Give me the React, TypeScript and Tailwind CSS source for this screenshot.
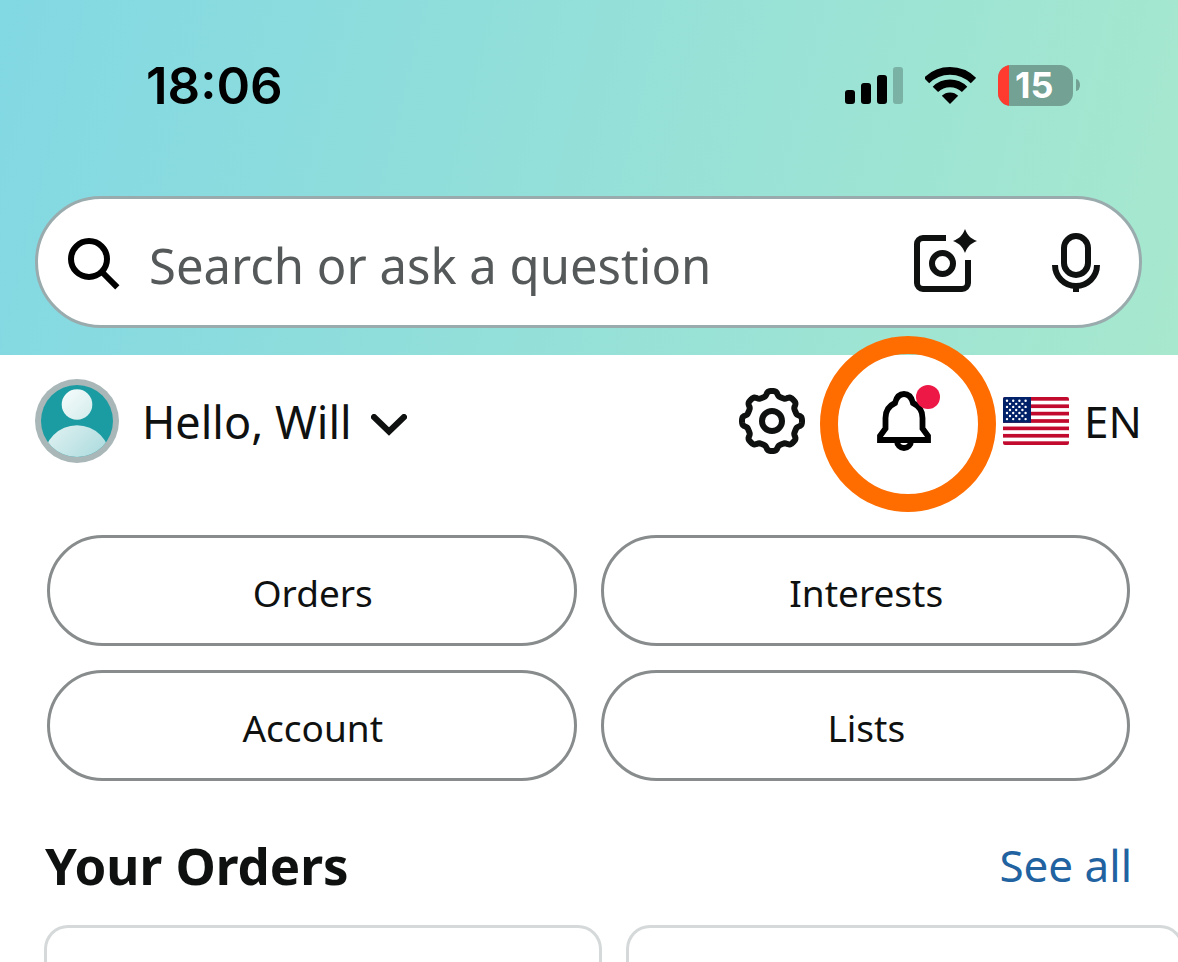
import type { ReactNode } from "react";

const SHORTCUTS = ["Orders", "Interests", "Account", "Lists"];

function gearOutline(): string {
  const steps = 240;
  const points: string[] = [];
  for (let i = 0; i < steps; i++) {
    const angle = (i / steps) * Math.PI * 2;
    const wave = Math.tanh(2 * Math.cos(8 * angle)) / Math.tanh(2);
    const r = 27.6 + 2.4 * wave;
    points.push(`${(33 + r * Math.cos(angle)).toFixed(2)} ${(33 + r * Math.sin(angle)).toFixed(2)}`);
  }
  return `M${points.join("L")}Z`;
}

const GEAR = gearOutline();

function SignalIcon() {
  return (
    <svg width="58" height="37" viewBox="0 0 58 37" aria-hidden="true">
      <rect x="0" y="23" width="10" height="14" rx="3" />
      <rect x="16" y="16" width="10" height="21" rx="3" />
      <rect x="32" y="8" width="10" height="29" rx="3" />
      <rect x="48" y="0" width="10" height="37" rx="3" opacity="0.22" />
    </svg>
  );
}

function WifiIcon() {
  return (
    <svg width="51" height="37" viewBox="0 0 51 37" fill="none" stroke="#000" strokeWidth="7.6" aria-hidden="true">
      <path d="M1.5 13.6A33.2 33.2 0 0 1 48.5 13.6" />
      <path d="M10.4 22.4A20.6 20.6 0 0 1 39.6 22.4" />
      <path d="M25 37L16.8 28.8A11.7 11.7 0 0 1 33.2 28.8Z" fill="#000" stroke="none" />
    </svg>
  );
}

function Battery() {
  return (
    <div className="flex items-center gap-[3px]">
      <div className="flex h-[41px] w-[75px] items-center overflow-hidden rounded-[13px] bg-[#73a193]">
        <div className="h-full w-[11px] bg-[#ff3b30]" />
        <span className="pl-[6px] text-[36px] leading-none font-bold text-white">15</span>
      </div>
      <div className="h-3 w-1 rounded-r-[4px_6px] bg-[#73a193]" />
    </div>
  );
}

function SearchIcon() {
  return (
    <svg width="52" height="52" viewBox="0 0 52 52" fill="none" stroke="#000" strokeWidth="6" aria-hidden="true">
      <circle cx="21" cy="21" r="18" />
      <path d="M33.5 33.5L49.3 49.3" />
    </svg>
  );
}

function CameraIcon() {
  return (
    <svg width="63" height="67" viewBox="0 0 63 67" fill="none" stroke="#0f1111" strokeWidth="6" aria-hidden="true">
      <path d="M32 9H9a6 6 0 0 0-6 6V54a6 6 0 0 0 6 6H48a6 6 0 0 0 6-6V31" />
      <circle cx="28.5" cy="34.5" r="10.5" />
      <path d="M51 0C54 7 56 9 63 12C56 15 54 17 51 24C48 17 46 15 39 12C46 9 48 7 51 0Z" fill="#0f1111" stroke="none" />
    </svg>
  );
}

function MicIcon() {
  return (
    <svg width="48" height="59" viewBox="0 0 48 59" fill="none" stroke="#0f1111" strokeWidth="6" aria-hidden="true">
      <rect x="12" y="3" width="24" height="39" rx="12" />
      <path d="M3 32a21 21 0 0 0 42 0M24 53V59" />
    </svg>
  );
}

function Avatar() {
  return (
    <svg width="84" height="84" viewBox="0 0 84 84" aria-hidden="true">
      <defs>
        <linearGradient id="head" x1="0" y1="0" x2="1" y2="1">
          <stop offset="0" stopColor="#f7fcfc" />
          <stop offset="1" stopColor="#d3ebeb" />
        </linearGradient>
        <linearGradient id="body" x1="0.1" y1="0" x2="0.7" y2="0.6">
          <stop offset="0" stopColor="#e0f1f1" />
          <stop offset="1" stopColor="#aedcdf" />
        </linearGradient>
        <clipPath id="disc">
          <circle cx="42" cy="42" r="36" />
        </clipPath>
      </defs>
      <circle cx="42" cy="42" r="42" fill="#a9b7b8" />
      <circle cx="42" cy="42" r="36" fill="#1a9ca2" />
      <circle cx="42" cy="25.500" r="15.300" fill="url(#head)" />
      <circle cx="42" cy="79.500" r="33.200" fill="url(#body)" clipPath="url(#disc)" />
    </svg>
  );
}

function ChevronIcon() {
  return (
    <svg width="36" height="22" viewBox="0 0 36 22" fill="none" stroke="#0f1111" strokeWidth="6" strokeLinecap="round" aria-hidden="true">
      <path d="M3 3L18 17.500L33 3" />
    </svg>
  );
}

function GearIcon() {
  return (
    <svg width="66" height="66" viewBox="0 0 66 66" fill="none" stroke="#0f1111" strokeWidth="6" strokeLinejoin="round" aria-hidden="true">
      <path d={GEAR} />
      <circle cx="33" cy="33" r="10" />
    </svg>
  );
}

function BellIcon() {
  return (
    <svg width="54" height="60" viewBox="0 0 54 60" fill="none" stroke="#000" strokeWidth="5.800" aria-hidden="true">
      <path d="M3 49V45L8.500 37.500V27C8.500 20 12 14.800 18 12C19.500 6 22.500 3 27 3S34.500 6 36 12C42 14.800 45.500 20 45.500 27V37.500L51 45V49Z" />
      <path d="M20 50a7 7 0 0 0 14 0" />
    </svg>
  );
}

function FlagIcon() {
  const h = 48 / 13;
  return (
    <svg width="66" height="48" viewBox="0 0 66 48" aria-hidden="true">
      <clipPath id="flag">
        <rect width="66" height="48" rx="2" />
      </clipPath>
      <g clipPath="url(#flag)">
        <rect width="66" height="48" fill="#fff" />
        {[0, 2, 4, 6, 8, 10, 12].map((i) => (
          <rect key={i} y={i * h} width="66" height={h} fill="#c10a2e" />
        ))}
        <rect width="28" height="25.800" fill="#012169" />
        {Array.from({ length: 7 }, (_, row) =>
          Array.from({ length: row % 2 ? 3 : 4 }, (_, col) => (
            <circle key={`${row}-${col}`} cx={4 + (row % 2 ? 3 : 0) + col * 6.200} cy={3.800 + row * 3.050} r="1.200" fill="#fff" />
          )),
        )}
      </g>
    </svg>
  );
}

function IconButton({ label, children }: { label: string; children: ReactNode }) {
  return (
    <button type="button" aria-label={label} className="relative shrink-0">
      {children}
    </button>
  );
}

export default function App() {
  return (
    <div className="flex min-h-screen flex-col overflow-hidden bg-white font-['Noto_Sans',sans-serif] text-[#0f1111]">
      <header className="bg-linear-[104deg,#82d8e3,#a7e8ce] pt-[63px] pr-9 pb-[27px] pl-[35px]">
        <div className="flex h-11 items-center justify-between pr-[62px] pl-[111px] font-['Inter',sans-serif]">
          <time className="text-[51px] leading-none font-semibold text-black">18:06</time>
          <div className="flex items-center gap-[22px]">
            <SignalIcon />
            <WifiIcon />
            <Battery />
          </div>
        </div>

        <form
          role="search"
          className="mt-[89px] flex h-[132px] items-center rounded-full border-3 border-[#9aabad] bg-white pr-[39px] pl-[30px]"
        >
          <label htmlFor="query" className="shrink-0 pt-1">
            <SearchIcon />
          </label>
          <input
            id="query"
            type="search"
            aria-label="Search or ask a question"
            placeholder="Search or ask a question"
            className="mx-[29px] h-full min-w-0 flex-1 pt-[6px] text-[49px] outline-none placeholder:text-[#565959]"
          />
          <div className="flex items-center gap-[75px]">
            <IconButton label="Search with camera">
              <CameraIcon />
            </IconButton>
            <IconButton label="Search by voice">
              <MicIcon />
            </IconButton>
          </div>
        </form>
      </header>

      <section className="flex items-center justify-between pt-6 pr-9 pl-[35px]">
        <button type="button" className="flex items-center gap-[23px]">
          <Avatar />
          <span className="flex items-center gap-[19px] text-[45px] leading-none">
            Hello, Will
            <span className="pt-2">
              <ChevronIcon />
            </span>
          </span>
        </button>
        <div className="flex items-center gap-[72px]">
          <IconButton label="Settings">
            <GearIcon />
          </IconButton>
          <div className="relative pt-[6px]">
            <IconButton label="Notifications">
              <BellIcon />
              <span className="absolute -top-[6px] -right-[9px] size-6 rounded-full bg-[#ed1846]" />
            </IconButton>
            <div className="pointer-events-none absolute -top-[49px] -left-[57px] size-44 rounded-full border-[18px] border-[#ff6d00]" />
          </div>
          <button type="button" className="flex items-center gap-[15px] text-[44px] leading-none">
            <FlagIcon />
            EN
          </button>
        </div>
      </section>

      <nav className="mt-[72px] grid grid-cols-2 gap-6 pr-12 pl-[47px]">
        {SHORTCUTS.map((name) => (
          <a
            key={name}
            href="#"
            className="flex h-[111px] items-center justify-center rounded-full border-3 border-[#888c8c] pt-1 pl-[2px] text-[37px] leading-none"
          >
            {name}
          </a>
        ))}
      </nav>

      <section className="flex flex-1 flex-col pt-[58px]">
        <div className="flex items-center justify-between pr-[46px] pl-[45px]">
          <h1 className="text-[51px] leading-[52px] font-bold">Your Orders</h1>
          <a href="#" className="text-[44px] leading-[52px] text-[#2162a1]">
            See all
          </a>
        </div>
        <div className="mt-[34px] flex flex-1 gap-6 overflow-hidden pl-11">
          <div className="w-[558px] shrink-0 rounded-t-3xl border-3 border-b-0 border-[#d5d9d9]" />
          <div className="w-[558px] shrink-0 rounded-t-3xl border-3 border-b-0 border-[#d5d9d9]" />
        </div>
      </section>
    </div>
  );
}
